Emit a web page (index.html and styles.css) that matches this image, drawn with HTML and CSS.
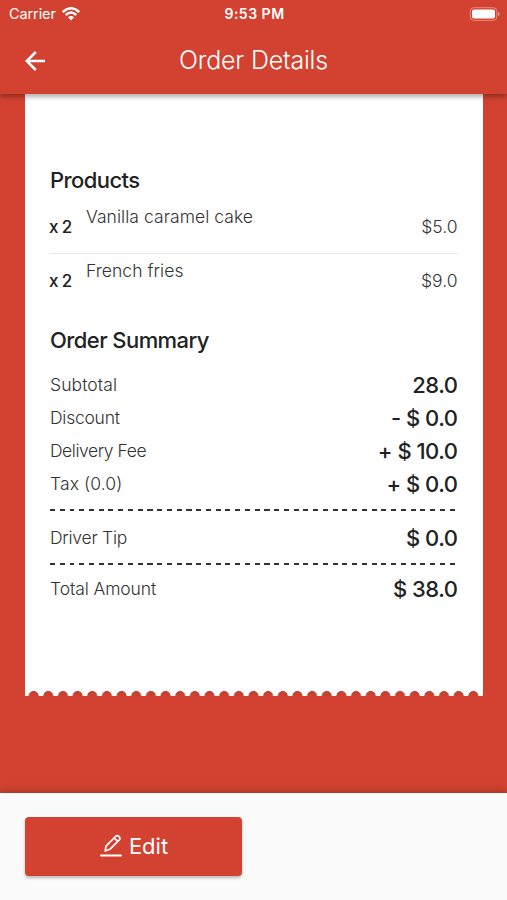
FILE: index.html
```html
<!DOCTYPE html>
<html lang="en">
<head>
<meta charset="utf-8">
<title>Order Details</title>
<link rel="stylesheet" href="styles.css">
</head>
<body>
<header class="top">
  <div class="status">
    <div class="carrier"><span>Carrier</span>
      <svg width="18" height="14" viewBox="0 0 18 14" fill="none" stroke="#fff" stroke-width="2.4"><path d="M.8 5Q9-2.6 17.2 5M3.8 8Q9 3.2 14.2 8"/><path d="M6 10.2Q9 7.6 12 10.2L9 13.4Z" fill="#fff" stroke="none"/></svg>
    </div>
    <div class="time">9:53 PM</div>
    <svg class="battery" width="31" height="14" viewBox="0 0 31 14"><rect x="1.2" y=".7" width="26.6" height="12.6" rx="3.6" fill="none" stroke="#fff" stroke-opacity=".4"/><rect x="3" y="2.5" width="23" height="9" rx="2" fill="#fff"/><path d="M29 5v4q1.600-.6 1.600-2t-1.600-2" fill="#fff" fill-opacity=".5"/></svg>
  </div>
  <div class="nav">
    <svg class="back" width="22" height="22" viewBox="0 0 22 22" fill="none" stroke="#fff" stroke-width="2.5"><path d="M20 11H2.200M10.800 2L1.800 11l9 9"/></svg>
    <h1>Order Details</h1>
  </div>
</header>
<main>
  <section class="receipt">
    <h2 class="products-title">Products</h2>
    <div class="product"><b>x 2</b><span class="name cake">Vanilla caramel cake</span><span class="price">$5.0</span></div>
    <div class="product"><b>x 2</b><span class="name fries">French fries</span><span class="price">$9.0</span></div>
    <h2 class="summary-title">Order Summary</h2>
    <div class="row"><span>Subtotal</span><strong>28.0</strong></div>
    <div class="row"><span class="discount">Discount</span><strong>- $ 0.0</strong></div>
    <div class="row"><span class="delivery">Delivery Fee</span><strong>+ $ 10.0</strong></div>
    <div class="row"><span>Tax (0.0)</span><strong>+ $ 0.0</strong></div>
    <div class="dashes"></div>
    <div class="row tip"><span>Driver Tip</span><strong>$ 0.0</strong></div>
    <div class="dashes last"></div>
    <div class="row total"><span>Total Amount</span><strong>$ 38.0</strong></div>
    <div class="scallops"></div>
  </section>
</main>
<footer>
  <button class="edit">
    <svg width="22" height="23" viewBox="0 0 22 23" fill="none" stroke="#fff" stroke-width="1.7" stroke-linejoin="round" stroke-linecap="round"><path d="M5.200 17l.8-4.800L15.500 2.500q1.700-1.700 3.500 0t.3 3.400L9.800 15.300ZM14.200 4l3.500 3.400"/><path d="M1 21.500h20" stroke-width="2"/></svg>
    <span>Edit</span>
  </button>
</footer>
</body>
</html>
```
FILE: styles.css
```css
* { box-sizing: border-box; }
body {
  margin: 0;
  height: 900px;
  display: flex;
  flex-direction: column;
  overflow: hidden;
  background: #d34231;
  color: #222;
  font-family: Inter, "Liberation Sans", sans-serif;
}
.top {
  position: relative;
  z-index: 1;
  height: 94px;
  background: #d34231;
  color: #fff;
  box-shadow: 0 2px 6px rgba(0, 0, 0, .4);
}
.status {
  height: 27px;
  padding: 0 7px 0 9px;
  display: grid;
  grid-template-columns: 1fr auto 1fr;
  align-items: center;
  font-size: 14.5px;
}
.carrier { display: flex; align-items: center; gap: 6px; letter-spacing: -.1px; }
.time { font-weight: 600; font-size: 14px; letter-spacing: .5px; }
.battery { justify-self: end; }
.nav {
  height: 67px;
  padding: 0 25px;
  display: grid;
  grid-template-columns: 22px 1fr 22px;
  align-items: center;
}
.back { margin-top: 1px; }
h1 { margin: 0 0 2px; text-align: center; font-size: 25px; font-weight: 300; line-height: 30px; letter-spacing: -.2px; }
main { height: 698.5px; flex: none; padding: 0 24.5px 0 25.3px; }
.receipt {
  height: 602px;
  padding: 72px 25px 0 24.7px;
  display: flex;
  flex-direction: column;
  background: #fff;
}
h2 { margin: 0; font-size: 22px; line-height: 28px; font-weight: 500; letter-spacing: -.58px; }
.product {
  height: 53.5px;
  flex: none;
  display: grid;
  grid-template-columns: 36px 1fr auto;
  align-items: start;
  font-size: 17.5px;
  line-height: 24px;
}
.product + .product { border-top: 1px solid #e8e8e8; }
.product b { font-size: 17px; font-weight: 500; margin: 15px 0 0 -1px; letter-spacing: -.6px; }
.name { margin-top: 5px; font-weight: 300; color: #333; letter-spacing: .05px; }
.product + .product .name { margin-top: 5px; }
.product + .product b, .product + .product .price { margin-top: 15px; }
.price { margin-top: 15px; font-weight: 300; color: #333; }
.products-title { margin-bottom: 5.5px; }
.summary-title { margin: 19.5px 0 14px; }
.row {
  height: 33px;
  flex: none;
  display: flex;
  align-items: center;
  justify-content: space-between;
}
.row span { font-size: 17.5px; font-weight: 300; color: #333; letter-spacing: .1px; }
.row .discount, .tip span { letter-spacing: -.25px; }
.row .delivery { letter-spacing: -.45px; }
.total span { letter-spacing: -.1px; }
.row strong { font-size: 22px; font-weight: 500; letter-spacing: -.5px; word-spacing: 0; }
.dashes {
  height: 2px;
  flex: none;
  margin: 9px 0 10px;
  background: repeating-linear-gradient(90deg, #333 0 5px, transparent 5px 9.75px);
}
.last { margin-bottom: 7px; }
.scallops {
  height: 6px;
  flex: none;
  margin: auto -25px 0 -24.7px;
  background: radial-gradient(circle at 50% 6px, #c64334 4.7px, transparent 5.3px) 1.3px 0 / 14.67px 6px repeat-x;
}
footer {
  flex: 1;
  padding: 24.5px 25px;
  background: #fafafa;
  box-shadow: 0 -2px 8px rgba(0, 0, 0, .22);
}
.edit {
  width: 217px;
  height: 59px;
  border: 0;
  border-radius: 4px;
  padding: 0 0 2px 1px;
  display: flex;
  align-items: center;
  justify-content: center;
  gap: 7px;
  background: #d34231;
  color: #fff;
  font: 400 22px Inter, "Liberation Sans", sans-serif;
  box-shadow: 0 2px 3px rgba(0, 0, 0, .25);
}
```
